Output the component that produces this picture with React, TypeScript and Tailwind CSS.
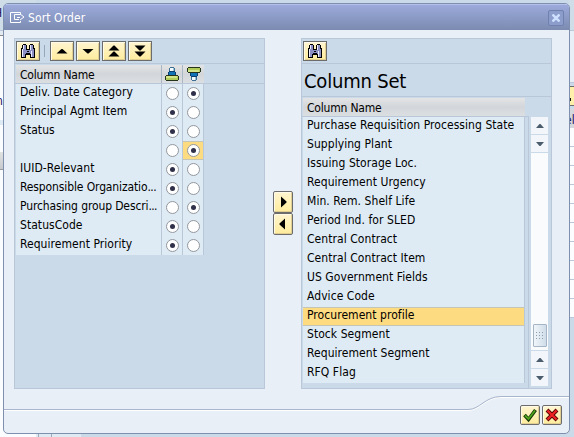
import React from "react";

const leftRows: { name: string; cut?: boolean; col: number; active?: boolean }[] = [
  { name: "Deliv. Date Category", col: 1 },
  { name: "Principal Agmt Item", col: 0 },
  { name: "Status", col: 0 },
  { name: "", col: 1, active: true },
  { name: "IUID-Relevant", col: 0 },
  { name: "Responsible Organizatio", cut: true, col: 0 },
  { name: "Purchasing group Descri", cut: true, col: 1 },
  { name: "StatusCode", col: 0 },
  { name: "Requirement Priority", col: 0 },
];

const rightRows = [
  "Purchase Requisition Processing State",
  "Supplying Plant",
  "Issuing Storage Loc.",
  "Requirement Urgency",
  "Min. Rem. Shelf Life",
  "Period Ind. for SLED",
  "Central Contract",
  "Central Contract Item",
  "US Government Fields",
  "Advice Code",
  "Procurement profile",
  "Stock Segment",
  "Requirement Segment",
  "RFQ Flag",
];

function Button({ children, className = "h-5 w-6" }: { children: React.ReactNode; className?: string }) {
  return (
    <button
      className={`${className} flex shrink-0 items-center justify-center border border-[#6c6c6c] bg-linear-to-b from-[#fff5cf] to-[#ffec9c] shadow-[inset_1px_1px_0_#fffbe8,inset_-1px_-1px_0_#e0cf90]`}
    >
      {children}
    </button>
  );
}

function Binoculars() {
  return (
    <svg width="14" height="14" viewBox="0 0 14 14" shapeRendering="crispEdges">
      <path d="M2 0h3v1h1v4h2V1h1V0h3v1h1v3h1v10H9v-3H5v3H0V4h1V1h1z" fill="#000" />
      <path d="M2 1h3v5h4V1h3v4h1v8h-3v-3H4v3H1V5h1z" fill="#8c8fc4" />
      <path d="M2 1h1v4H2v8H1V5h1zM9 1h1v5H9zM10 7h1v6h-1z" fill="#eceeff" />
      <path d="M5 5h4v1H5zM5 9h4v1H5zM6 7h2v1H6z" fill="#000" />
    </svg>
  );
}

function Arrow({ d }: { d: string }) {
  return (
    <svg width="16" height="16" viewBox="0 0 16 16">
      <path d={d} fill="#000" />
    </svg>
  );
}

function SortIcon({ flip }: { flip?: boolean }) {
  return (
    <svg width="14" height="14" viewBox="0 0 14 14" shapeRendering="crispEdges" className={flip ? "-scale-y-100" : ""}>
      <path d="M5 0h4v1h1v3h-6V1h1z" fill="#3c6f93" />
      <path d="M4 4h6v1h1v3H3V5h1z" fill="#0b3f70" />
      <path d="M1 8h12v1h1v4h-1v1H1v-1H0V9h1z" fill="#24351c" />
      <path d="M5 1h4v3H5z" fill="#f4fbfd" />
      <path d="M8 1h1v3H8z" fill="#9ec4dc" />
      <path d="M4 5h6v3H4z" fill="#1272b6" />
      <path d="M1 9h12v4H1z" fill="#b0cb58" />
      <path d="M1 9h11v2H1z" fill="#d3e58b" />
    </svg>
  );
}

function Radio({ on, active }: { on: boolean; active?: boolean }) {
  return (
    <div
      className={`flex h-[19px] w-[21px] shrink-0 items-center justify-center border-r border-[#b9c8d8] ${active ? "bg-[#fddb80] shadow-[inset_0_1px_0_#c4c5b4,inset_0_-1px_0_#c4c5b4]" : ""}`}
    >
      <span className="flex h-[13px] w-[13px] items-center justify-center rounded-full border border-[#93979d] bg-white">
        {on && <span className="h-[5px] w-[5px] rounded-full bg-[#30304a]" />}
      </span>
    </div>
  );
}

function ScrollArrow({ down }: { down?: boolean }) {
  return (
    <div className="flex h-[18px] shrink-0 items-center justify-center border-b border-[#cbdae9] bg-[#f2f6fb]">
      <svg width="8" height="4" viewBox="0 0 8 4" className={down ? "rotate-180" : ""}>
        <path d="M0 4L3.500 0h1L8 4z" fill="#4b5c6c" />
      </svg>
    </div>
  );
}

function Backdrop() {
  return (
    <div className="flex h-full justify-between">
      <div className="flex w-9 flex-col overflow-hidden bg-[#fafcff]">
        <div className="h-[31px] shrink-0 border-b border-[#b9c7d9] bg-[#cfdde9] pt-[6px] leading-[15px] text-[#1a1060]">
          <span className="-ml-[6px]">H</span>
        </div>
        <div className="h-[5px] shrink-0 border-b border-[#888] bg-[#e3ebf2]" />
        <div className="h-[84px] shrink-0 pt-[58px] leading-[15px] text-[#1a1060]">
          <span className="-ml-[4px]">n</span>
        </div>
        <div className="h-[5px] shrink-0 bg-[#dfebf4]" />
        <div className="mt-[27px] h-[18px] shrink-0 border-b border-[#999] bg-linear-to-b from-[#e2e2e2] to-[#c6cacd]" />
      </div>
      <div className="flex flex-1 items-end bg-[#cbdae9]">
        <div className="h-1 w-[45px] bg-[#e0eaf3] pl-[2px]">
          <div className="h-1 w-[14px] border-x border-[#9aaabb]" />
        </div>
      </div>
      <div className="flex w-[5px] flex-col overflow-hidden bg-[#cbdae9]">
        <div className="h-[31px] shrink-0 border-b border-[#b9c7d9] bg-[#cfdde9]" />
        <div className="h-[52px] shrink-0 border-b border-[#b9c7d9] bg-[#e8eff6]" />
        <div className="mt-[3px] flex h-5 shrink-0 items-end border-y border-[#6c6c6c] bg-[#ffefaa] pb-[4px]">
          <i className="h-[3px] w-[2px] bg-[#111]" />
        </div>
        <div className="mt-[3px] h-[19px] shrink-0 bg-[#d4d8dc] leading-[22px] text-[#1a1060]">
          <span className="-ml-[4px]">el</span>
        </div>
        {Array.from({ length: 10 }, (_, i) => (
          <div key={i} className="h-[19px] shrink-0 border-b border-[#b9c7d9] bg-[#fcfdff]" />
        ))}
      </div>
    </div>
  );
}

export default function App() {
  return (
    <div className="relative h-[437px] w-[574px] overflow-hidden whitespace-nowrap bg-[#cbdae9] font-['DejaVu_Sans_Condensed','DejaVu_Sans',sans-serif] text-[12px] text-black">
      <Backdrop />
      <section className="absolute left-[3px] top-[3px] flex h-[431px] w-[567px] flex-col overflow-hidden rounded-[5px] border border-[#7f8fae] bg-[#e8eff6]">
        <header className="flex h-[26px] shrink-0 items-center border-t border-[#b3c0ea] bg-linear-to-b from-[#9baadb] to-[#7b8bb0] pl-[6px] pr-[5px] text-white">
          <svg width="15" height="12" viewBox="0 0 15 12" fill="none" stroke="#fff">
            <path d="M10.500 2V.5H.5v10h10V9M10 2.500H4.500v5H9M10 2l4 3-4 3M7 5.500h3" />
          </svg>
          <span className="ml-[3px] flex-1 tracking-[0.1px]">Sort Order</span>
          <span className="flex h-[16px] w-[16px] items-center justify-center rounded-[2px] border border-[#7081ad] bg-[#8c9dcc]">
            <svg width="8" height="8" viewBox="0 0 8 8" stroke="#cfe0ff" strokeWidth="2.400">
              <path d="M.5.5l7 7M7.500.5l-7 7" />
            </svg>
          </span>
        </header>

        <main className="flex h-[360px] shrink-0 pl-[10px] pt-[8px]">
          <div className="h-[351px] w-[251px] border border-[#b9c7d9] bg-[#cbdae9]">
            <div className="flex h-[25px] items-center gap-[2px] border-b border-[#b9c7d9] pl-px">
              <Button><Binoculars /></Button>
              <i className="ml-[2px] mr-[3px] h-3 w-px bg-[#96a8bb]" />
              <Button><Arrow d="M2.500 10.500L7.500 6h1l5 4.500z" /></Button>
              <Button><Arrow d="M2.500 6L7.500 10.500h1l5-4.500z" /></Button>
              <Button><Arrow d="M2.500 7.500L7.500 2.500h1l5 5zM2.500 13.500L7.500 8.500h1l5 5z" /></Button>
              <Button><Arrow d="M2.500 2.500L7.500 7.500h1l5-5zM2.500 8.500L7.500 13.500h1l5-5z" /></Button>
            </div>
            <div className="flex h-5 border-b border-[#b9c7d9] pl-px pt-px">
              <div className="flex w-[188px] bg-linear-to-b from-[#e3e4e5] via-[#d2d6da] to-[#dcdfe2]">
                <div className="w-[146px] border-r border-[#a9b6c4] pl-[4px] leading-[20px] tracking-[-0.2px]">Column Name</div>
                <div className="flex w-[21px] items-center justify-center border-r border-[#a9b6c4]"><SortIcon /></div>
                <div className="flex w-[21px] items-center justify-center"><SortIcon flip /></div>
              </div>
            </div>
            <div className="ml-px w-[188px] bg-[#deebf5]">
              {leftRows.map((r) => (
                <div key={r.name} className="flex h-[19px]">
                  <div className="flex w-[146px] shrink-0 border-r border-[#b9c8d8] pl-[4px] leading-[16px]">
                    <span className={r.cut ? "tracking-[-0.12px]" : "tracking-[0.05px]"}>{r.name}</span>
                    {r.cut && <span className="tracking-[-0.6px]">...</span>}
                  </div>
                  <Radio on={r.col === 0} />
                  <Radio on={r.col === 1} active={r.active} />
                </div>
              ))}
            </div>
          </div>

          <div className="flex w-[36px] flex-col items-center pr-px pt-[153px]">
            <Button className="h-[22px] w-5 rounded-[2px]"><Arrow d="M6 2.500v11L11.500 8.500v-1z" /></Button>
            <Button className="h-[22px] w-5 rounded-[2px]"><Arrow d="M10 2.500v11L4.500 8.500v-1z" /></Button>
          </div>

          <div className="flex h-[351px] w-[251px] flex-col border border-[#b9c7d9] bg-[#cbdae9]">
            <div className="flex h-[25px] shrink-0 items-center border-b border-[#b9c7d9] pl-px">
              <Button><Binoculars /></Button>
            </div>
            <h1 className="h-[33px] shrink-0 border-b border-[#b9c7d9] pl-[2px] text-[20px] leading-[34px] tracking-[-0.2px]">Column Set</h1>
            <div className="flex flex-1">
              <div className="w-[227px]">
                <div className="ml-px mt-px h-[18px] w-[222px] bg-linear-to-b from-[#e3e4e5] via-[#d2d6da] to-[#dcdfe2] pl-[4px] leading-[20px] tracking-[-0.2px]">
                  Column Name
                </div>
                <div className="border-r border-t border-[#b9c7d9] pb-[5px]">
                  <div className="ml-px w-[222px] border-r border-[#b9c8d8] bg-[#deebf5]">
                    {rightRows.map((r) => (
                      <div
                        key={r}
                        className={`h-[19px] pl-[4px] leading-[16px] tracking-[0.06px] ${r === "Procurement profile" ? "bg-[#fddb80] shadow-[inset_0_1px_0_#c4c5b4,inset_0_-1px_0_#c4c5b4]" : ""}`}
                      >
                        {r}
                      </div>
                    ))}
                  </div>
                </div>
              </div>
              <div className="mb-px ml-[2px] mt-[20px] flex w-[17px] flex-col bg-[#fafbfd]">
                <ScrollArrow />
                <ScrollArrow down />
                <div className="flex flex-1 flex-col items-center justify-end border-b border-[#cbdae9] pb-[3px]">
                  <div className="grid h-[23px] w-[14px] grid-cols-3 place-content-center gap-[2px] rounded-[1px] border border-[#a5b5c5] bg-linear-to-r from-[#f0f5f9] to-[#cfdde9] px-[2px]">
                    {Array.from({ length: 9 }, (_, i) => (
                      <i key={i} className="h-px w-px bg-[#8c9dad]" />
                    ))}
                  </div>
                </div>
                <ScrollArrow />
                <ScrollArrow down />
              </div>
            </div>
          </div>
        </main>

        <footer className="relative flex flex-1 items-end justify-end gap-[2px] pb-[8px] pr-[7px]">
          <svg className="absolute left-0 top-[5px]" width="565" height="16" viewBox="0 0 565 16" fill="none">
            <path d="M0 15.500h464c12 0 17-13 33-13h68" stroke="#fff" />
            <path d="M0 14.500h464c12 0 17-13 33-13h68" stroke="#a8b5cc" />
          </svg>
          <Button className="h-5 w-5 rounded-[2px]">
            <svg width="16" height="16" viewBox="0 0 16 16">
              <path d="M2.500 8l4 4.500L13.500 3" fill="none" stroke="#163708" strokeWidth="3.600" />
              <path d="M3 8.500l3.500 3.500L13 3.500" fill="none" stroke="#4fa51b" strokeWidth="1.800" />
            </svg>
          </Button>
          <Button className="h-5 w-5 rounded-[2px]">
            <svg width="16" height="16" viewBox="0 0 16 16">
              <path d="M3 3l10 10M13 3L3 13" stroke="#5a0505" strokeWidth="4" />
              <path d="M3.500 3.500l9 9M12.500 3.500l-9 9" stroke="#f02424" strokeWidth="2.200" />
            </svg>
          </Button>
        </footer>
      </section>
    </div>
  );
}
